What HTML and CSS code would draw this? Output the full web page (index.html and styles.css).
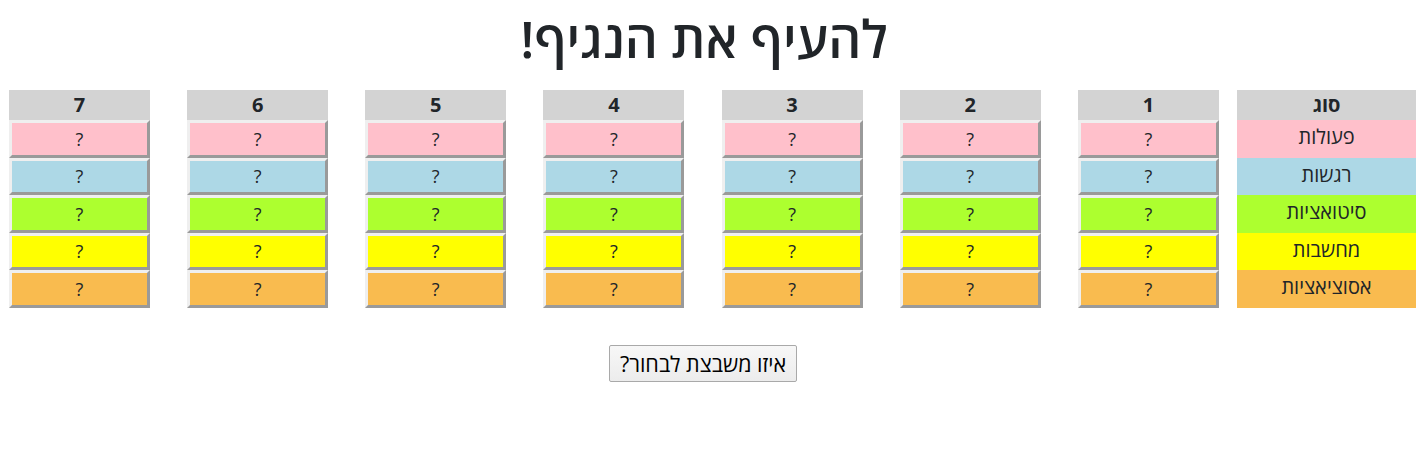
FILE: index.html
```html
<!DOCTYPE html>
<html lang="he" dir="rtl">
<head>
<meta charset="utf-8">
<title>להעיף את הנגיף!</title>
<link rel="stylesheet" href="styles.css">
</head>
<body>
<h1 class="title">להעיף את הנגיף!</h1>
<div class="board">
  <div class="col col-type">
    <div class="head">סוג</div>
    <div class="cat c-pink">פעולות</div>
    <div class="cat c-blue">רגשות</div>
    <div class="cat c-green">סיטואציות</div>
    <div class="cat c-yellow">מחשבות</div>
    <div class="cat c-orange">אסוציאציות</div>
  </div>
  <div class="col"><div class="head">1</div><button class="cell c-pink">?</button><button class="cell c-blue">?</button><button class="cell c-green">?</button><button class="cell c-yellow">?</button><button class="cell c-orange">?</button></div>
  <div class="col"><div class="head">2</div><button class="cell c-pink">?</button><button class="cell c-blue">?</button><button class="cell c-green">?</button><button class="cell c-yellow">?</button><button class="cell c-orange">?</button></div>
  <div class="col"><div class="head">3</div><button class="cell c-pink">?</button><button class="cell c-blue">?</button><button class="cell c-green">?</button><button class="cell c-yellow">?</button><button class="cell c-orange">?</button></div>
  <div class="col"><div class="head">4</div><button class="cell c-pink">?</button><button class="cell c-blue">?</button><button class="cell c-green">?</button><button class="cell c-yellow">?</button><button class="cell c-orange">?</button></div>
  <div class="col"><div class="head">5</div><button class="cell c-pink">?</button><button class="cell c-blue">?</button><button class="cell c-green">?</button><button class="cell c-yellow">?</button><button class="cell c-orange">?</button></div>
  <div class="col"><div class="head">6</div><button class="cell c-pink">?</button><button class="cell c-blue">?</button><button class="cell c-green">?</button><button class="cell c-yellow">?</button><button class="cell c-orange">?</button></div>
  <div class="col"><div class="head">7</div><button class="cell c-pink">?</button><button class="cell c-blue">?</button><button class="cell c-green">?</button><button class="cell c-yellow">?</button><button class="cell c-orange">?</button></div>
</div>
<div class="actions">
  <button class="pick">איזו משבצת לבחור?</button>
</div>
</body>
</html>
```

FILE: styles.css
```css
html, body {
  margin: 0;
  padding: 0;
  background: #fff;
}
body {
  font-family: "Open Sans", "DejaVu Sans", sans-serif;
  color: #212529;
  direction: rtl;
}
.title {
  margin: 0;
  padding: 5px 20px 0 0;
  height: 84px;
  box-sizing: border-box;
  text-align: center;
  font-size: 51.5px;
  font-weight: 600;
  line-height: 66px;
  color: #212529;
}
.board {
  display: flex;
  flex-direction: row;
  gap: 37.2px;
  padding: 6px 12px 0 9px;
}
.col {
  width: 141px;
  display: flex;
  flex-direction: column;
}
.col-type {
  width: 179px;
  margin-left: -19px;
}
.head {
  height: 30px;
  background: #d3d3d3;
  text-align: center;
  font-weight: 700;
  font-size: 20px;
  line-height: 30px;
}
.cat {
  height: 37.5px;
  text-align: center;
  font-size: 20px;
  line-height: 33px;
}
.cell {
  height: 37.5px;
  margin: 0;
  padding: 0;
  box-sizing: border-box;
  border-width: 3px;
  border-style: solid;
  border-color: #efefef #9a9a9a #9a9a9a #efefef;
  font-family: "Open Sans", "DejaVu Sans", sans-serif;
  font-size: 18px;
  color: #212529;
  line-height: 28px;
  text-align: center;
}
.c-pink { background: #ffc0cb; }
.c-blue { background: #add8e6; }
.c-green { background: #adff2f; }
.c-yellow { background: #ffff00; }
.c-orange { background: #f9bb4f; }
.actions {
  display: flex;
  justify-content: center;
  padding-top: 37px;
}
.pick {
  height: 37px;
  padding: 0 10px;
  font-family: "Open Sans", "DejaVu Sans", sans-serif;
  font-size: 21.5px;
  color: #000;
  background: linear-gradient(#f7f7f7, #ececec);
  border: 1px solid #a9a9a9;
  border-radius: 2px;
  margin-right: 22px;
}
```
